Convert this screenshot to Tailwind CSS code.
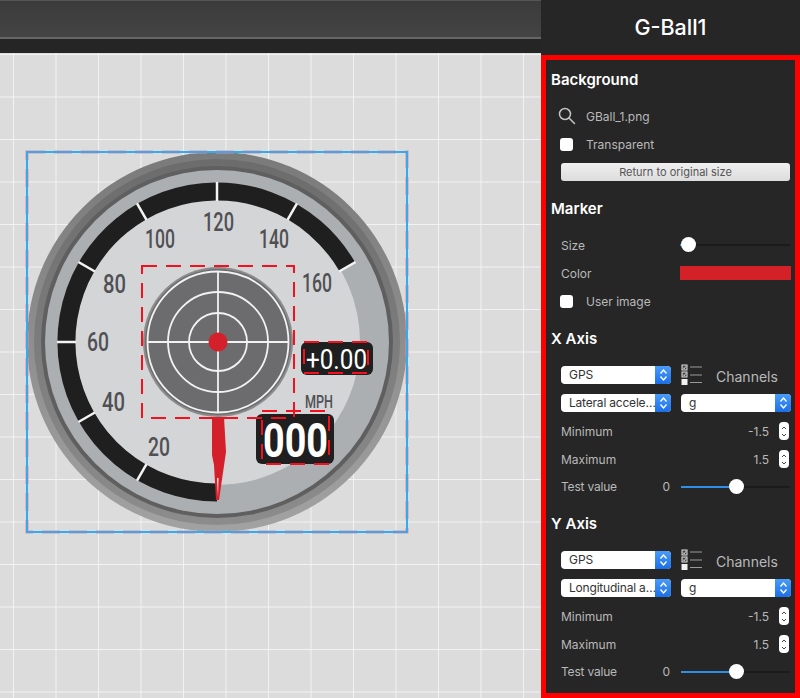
<!DOCTYPE html>
<html lang="en">
<head>
<meta charset="UTF-8">
<title>G-Ball1</title>
<script src="https://cdn.jsdelivr.net/npm/@tailwindcss/browser@4"></script>
</head>
<body class="bg-[#262626] font-['Inter','Liberation_Sans',sans-serif]">
<div class="flex w-[800px] h-[698px] overflow-hidden">

  <!-- left: toolbar and canvas -->
  <div class="flex flex-col w-[541px] shrink-0">
    <div class="h-[39px] border-t border-b-2 border-t-[#555] border-b-[#666] bg-gradient-to-b from-[#3b3b3b] to-[#444]"></div>
    <div class="h-[14px] bg-[#252525]"></div>
    <div class="relative flex-1 bg-[#dcdcdc] bg-[linear-gradient(to_right,#f2f2f2_1px,transparent_1px),linear-gradient(to_bottom,#f2f2f2_1px,transparent_1px)] bg-[size:42.5px_42.5px] bg-[position:13px_1px]">
      <svg class="absolute inset-0" width="541" height="645" viewBox="0 53 541 645" font-family="Roboto, sans-serif">
        <defs>
          <linearGradient id="rim" x1="0" y1="0" x2="0" y2="1">
            <stop offset="0" stop-color="#7a7a7a"/>
            <stop offset="1" stop-color="#a2a2a2"/>
          </linearGradient>
          <linearGradient id="rim2" x1="0" y1="0" x2="0" y2="1">
            <stop offset="0" stop-color="#6c6c6c"/>
            <stop offset="1" stop-color="#8c8c8c"/>
          </linearGradient>
        </defs>

        <!-- dial -->
        <circle cx="217" cy="342" r="190" fill="url(#rim)"/>
        <circle cx="217" cy="342" r="183" fill="url(#rim2)"/>
        <circle cx="217" cy="342" r="176" fill="#5f5f5f"/>
        <circle cx="217" cy="342" r="172" fill="#abafb2"/>
        <circle cx="217" cy="342" r="143" fill="#d4d5d7"/>
        <path d="M217 492.5 A150.5 150.5 0 1 1 347.3 266.8" fill="none" stroke="#1f1f1f" stroke-width="18"/>
        <g stroke="#f4f4f4" stroke-width="2.5">
          <line x1="217" y1="483" x2="217" y2="502" transform="rotate(30 217 342)"/>
          <line x1="217" y1="483" x2="217" y2="502" transform="rotate(60 217 342)"/>
          <line x1="217" y1="483" x2="217" y2="502" transform="rotate(90 217 342)"/>
          <line x1="217" y1="483" x2="217" y2="502" transform="rotate(120 217 342)"/>
          <line x1="217" y1="483" x2="217" y2="502" transform="rotate(150 217 342)"/>
          <line x1="217" y1="483" x2="217" y2="502" transform="rotate(180 217 342)"/>
          <line x1="217" y1="483" x2="217" y2="502" transform="rotate(210 217 342)"/>
          <line x1="217" y1="483" x2="217" y2="502" transform="rotate(240 217 342)"/>
        </g>

        <!-- scale numbers -->
        <g fill="#505054" font-size="26" font-weight="500">
          <text x="148" y="456" textLength="22" lengthAdjust="spacingAndGlyphs">20</text>
          <text x="102" y="411" textLength="23" lengthAdjust="spacingAndGlyphs">40</text>
          <text x="87" y="351" textLength="22" lengthAdjust="spacingAndGlyphs">60</text>
          <text x="103" y="293" textLength="23" lengthAdjust="spacingAndGlyphs">80</text>
          <text x="145" y="248" textLength="30" lengthAdjust="spacingAndGlyphs">100</text>
          <text x="203" y="231" textLength="31" lengthAdjust="spacingAndGlyphs">120</text>
          <text x="259" y="248" textLength="30" lengthAdjust="spacingAndGlyphs">140</text>
          <text x="302" y="292" textLength="30" lengthAdjust="spacingAndGlyphs">160</text>
          <text x="305" y="408" font-size="18" textLength="28" lengthAdjust="spacingAndGlyphs">MPH</text>
        </g>

        <!-- needle -->
        <polygon points="212,417 224,417 226,452 219,500 216,500 214,465 212,455" fill="#d4202a"/>
        <polygon points="217,478 218.500,478 218,497" fill="#f4f4f4"/>

        <!-- target -->
        <circle cx="218" cy="342" r="75" fill="#8c8c8c"/>
        <circle cx="218" cy="342" r="73" fill="#6c6c6e"/>
        <g fill="none" stroke="#f2f2f2" stroke-width="1.800">
          <circle cx="218" cy="342" r="70.500"/>
          <circle cx="218" cy="342" r="50"/>
          <circle cx="218" cy="342" r="29"/>
          <line x1="147.500" y1="342" x2="288.500" y2="342"/>
          <line x1="218" y1="271.500" x2="218" y2="412.500"/>
        </g>
        <circle cx="218" cy="342" r="9.500" fill="#d4202a"/>

        <!-- readouts -->
        <rect x="301" y="342" width="72" height="33" rx="6" fill="#1f1f1f"/>
        <text x="306" y="369" font-size="28" font-weight="400" fill="#fff" textLength="61" lengthAdjust="spacingAndGlyphs">+0.00</text>
        <rect x="256" y="414" width="78" height="50" rx="6" fill="#1f1f1f"/>
        <text x="263" y="457" font-size="49" font-weight="700" fill="#fff" textLength="65" lengthAdjust="spacingAndGlyphs">000</text>

        <!-- selection outlines -->
        <g fill="none" stroke="#f5101f" stroke-width="2" stroke-dasharray="15 9">
          <rect x="142" y="266" width="152" height="152"/>
          <rect x="304" y="342" width="64" height="31"/>
          <rect x="262" y="411" width="67" height="53"/>
        </g>
        <rect x="27" y="152" width="380" height="380" fill="none" stroke="#ee8a94" stroke-width="3" stroke-dasharray="18 9"/>
        <rect x="27" y="152" width="380" height="380" fill="none" stroke="#36aaf0" stroke-width="2"/>
      </svg>
    </div>
  </div>

  <!-- right: properties panel -->
  <div class="flex flex-col w-[259px] shrink-0 bg-[#262626] text-[#b9b9b9] text-[12px]">
    <div class="h-[55px] flex items-center justify-center text-[21.500px] font-medium text-white">G-Ball1</div>
    <div class="h-[643px] border-[5px] border-[#ff0000] bg-[#262626]">

      <h2 class="h-[38px] pl-[5px] pt-[2px] flex items-center text-[15px] font-semibold text-white">Background</h2>
      <div class="mt-[4px] h-[28px] pl-[12px] flex items-center">
        <svg class="w-[18px] h-[18px] shrink-0" viewBox="0 0 18 18" fill="none" stroke="#c4c4c4" stroke-width="1.500" stroke-linecap="round">
          <circle cx="7" cy="7" r="5.500"/>
          <line x1="11" y1="11" x2="16.500" y2="16.500"/>
        </svg>
        <span class="ml-[10px] pt-[2px]">GBall_1.png</span>
      </div>
      <div class="h-[28px] pl-[14px] flex items-center">
        <span class="w-[13px] h-[13px] rounded-[3px] bg-white"></span>
        <span class="ml-[13px] pt-[2px]">Transparent</span>
      </div>
      <div class="h-[28px] pl-[15px] pr-[5px] flex items-center">
        <button class="w-full h-[18px] rounded-[3px] bg-gradient-to-b from-[#f0f0f0] to-[#dcdcdc] text-[11px] text-[#555]">Return to original size</button>
      </div>

      <h2 class="mt-[3px] h-[38px] pl-[5px] pt-[2px] flex items-center text-[15px] font-semibold text-white">Marker</h2>
      <div class="mt-[4px] h-[28px] pl-[15px] pr-[5px] flex items-center justify-between">
        <span class="pt-[2px]">Size</span>
        <div class="relative w-[110px] h-[2px] bg-[#1b1b1b]">
          <span class="absolute left-0 top-0 h-[2px] w-[8px] bg-[#2f8fe8]"></span>
          <span class="absolute left-[1px] top-[-7px] w-[15px] h-[15px] rounded-full bg-white"></span>
        </div>
      </div>
      <div class="h-[28px] pl-[15px] pr-[4px] flex items-center justify-between">
        <span class="pt-[2px]">Color</span>
        <span class="w-[111px] h-[14px] bg-[#d42027]"></span>
      </div>
      <div class="h-[28px] pl-[14px] flex items-center">
        <span class="w-[13px] h-[13px] rounded-[3px] bg-white"></span>
        <span class="ml-[13px] pt-[2px]">User image</span>
      </div>

      <h2 class="mt-[4px] h-[38px] pl-[5px] pt-[2px] flex items-center text-[15px] font-semibold text-white">X Axis</h2>
      <div class="mt-[4px] h-[28px] pl-[15px] flex items-center">
        <div class="flex items-center w-[110px] h-[18px] rounded-[4px] bg-white overflow-hidden text-[#333]">
          <span class="flex-1 pl-[8px]">GPS</span>
          <span class="flex items-center justify-center w-[16px] h-full bg-gradient-to-b from-[#4a9cf8] to-[#1a6fe8]">
            <svg width="9" height="14" viewBox="0 0 9 14" fill="none" stroke="#fff" stroke-width="1.400"><path d="M1.500 5.500 4.500 2 7.500 5.500M1.500 8.500 4.500 12 7.500 8.500"/></svg>
          </span>
        </div>
        <svg class="ml-[10px] shrink-0" width="22" height="22" viewBox="0 0 22 22">
          <rect x="1" y="1" width="5" height="5" fill="#444" stroke="#e4e4e4"/>
          <path d="M2 3.500 3.200 4.800 5 2.200" fill="none" stroke="#fff" stroke-width=".8"/>
          <rect x="1" y="8" width="5" height="5" fill="#444" stroke="#e4e4e4"/>
          <path d="M2 10.500 3.200 11.800 5 9.200" fill="none" stroke="#fff" stroke-width=".8"/>
          <rect x=".5" y="15" width="6" height="6" fill="#f2f2f2"/>
          <g stroke="#9a9a9a" stroke-width="1"><line x1="9" y1="3" x2="21" y2="3"/><line x1="9" y1="11" x2="21" y2="11"/><line x1="9" y1="18.500" x2="21" y2="18.500"/></g>
        </svg>
        <span class="ml-[13px] pt-[3px] text-[14px] leading-none">Channels</span>
      </div>
      <div class="h-[27px] pl-[15px] flex items-center">
        <div class="flex items-center w-[110px] h-[18px] rounded-[4px] bg-white overflow-hidden text-[#333]">
          <span class="flex-1 min-w-0 pl-[8px] whitespace-nowrap tracking-[-0.2px]">Lateral accele…</span>
          <span class="flex items-center justify-center w-[16px] h-full shrink-0 bg-gradient-to-b from-[#4a9cf8] to-[#1a6fe8]">
            <svg width="9" height="14" viewBox="0 0 9 14" fill="none" stroke="#fff" stroke-width="1.400"><path d="M1.500 5.500 4.500 2 7.500 5.500M1.500 8.500 4.500 12 7.500 8.500"/></svg>
          </span>
        </div>
        <div class="ml-[10px] flex items-center w-[110px] h-[18px] rounded-[4px] bg-white overflow-hidden text-[#333]">
          <span class="flex-1 pl-[8px]">g</span>
          <span class="flex items-center justify-center w-[16px] h-full bg-gradient-to-b from-[#4a9cf8] to-[#1a6fe8]">
            <svg width="9" height="14" viewBox="0 0 9 14" fill="none" stroke="#fff" stroke-width="1.400"><path d="M1.500 5.500 4.500 2 7.500 5.500M1.500 8.500 4.500 12 7.500 8.500"/></svg>
          </span>
        </div>
      </div>
      <div class="mt-[1px] h-[28px] pl-[15px] pr-[6px] flex items-center">
        <span class="flex-1 pt-[2px]">Minimum</span>
        <span class="pt-[2px]">-1.5</span>
        <span class="ml-[10px] flex flex-col items-center justify-center w-[10px] h-[18px] rounded-[4px] bg-white">
          <svg width="6" height="13" viewBox="0 0 6 13" fill="none" stroke="#444" stroke-width="1"><path d="M1 4 3 2 5 4M1 9 3 11 5 9"/></svg>
        </span>
      </div>
      <div class="h-[28px] pl-[15px] pr-[6px] flex items-center">
        <span class="flex-1 pt-[2px]">Maximum</span>
        <span class="pt-[2px]">1.5</span>
        <span class="ml-[10px] flex flex-col items-center justify-center w-[10px] h-[18px] rounded-[4px] bg-white">
          <svg width="6" height="13" viewBox="0 0 6 13" fill="none" stroke="#444" stroke-width="1"><path d="M1 4 3 2 5 4M1 9 3 11 5 9"/></svg>
        </span>
      </div>
      <div class="h-[27px] pl-[15px] pr-[5px] flex items-center">
        <span class="flex-1 tracking-[-0.2px]">Test value</span>
        <span>0</span>
        <div class="relative ml-[11px] w-[109px] h-[2px] bg-[#1b1b1b]">
          <span class="absolute left-0 top-0 h-[2px] w-[55px] bg-[#2f8fe8]"></span>
          <span class="absolute left-[48px] top-[-7px] w-[15px] h-[15px] rounded-full bg-white"></span>
        </div>
      </div>

      <h2 class="mt-[4px] h-[38px] pl-[5px] pt-[2px] flex items-center text-[15px] font-semibold text-white">Y Axis</h2>
      <div class="mt-[4px] h-[28px] pl-[15px] flex items-center">
        <div class="flex items-center w-[110px] h-[18px] rounded-[4px] bg-white overflow-hidden text-[#333]">
          <span class="flex-1 pl-[8px]">GPS</span>
          <span class="flex items-center justify-center w-[16px] h-full bg-gradient-to-b from-[#4a9cf8] to-[#1a6fe8]">
            <svg width="9" height="14" viewBox="0 0 9 14" fill="none" stroke="#fff" stroke-width="1.400"><path d="M1.500 5.500 4.500 2 7.500 5.500M1.500 8.500 4.500 12 7.500 8.500"/></svg>
          </span>
        </div>
        <svg class="ml-[10px] shrink-0" width="22" height="22" viewBox="0 0 22 22">
          <rect x="1" y="1" width="5" height="5" fill="#444" stroke="#e4e4e4"/>
          <path d="M2 3.500 3.200 4.800 5 2.200" fill="none" stroke="#fff" stroke-width=".8"/>
          <rect x="1" y="8" width="5" height="5" fill="#444" stroke="#e4e4e4"/>
          <path d="M2 10.500 3.200 11.800 5 9.200" fill="none" stroke="#fff" stroke-width=".8"/>
          <rect x=".5" y="15" width="6" height="6" fill="#f2f2f2"/>
          <g stroke="#9a9a9a" stroke-width="1"><line x1="9" y1="3" x2="21" y2="3"/><line x1="9" y1="11" x2="21" y2="11"/><line x1="9" y1="18.500" x2="21" y2="18.500"/></g>
        </svg>
        <span class="ml-[13px] pt-[3px] text-[14px] leading-none">Channels</span>
      </div>
      <div class="h-[27px] pl-[15px] flex items-center">
        <div class="flex items-center w-[110px] h-[18px] rounded-[4px] bg-white overflow-hidden text-[#333]">
          <span class="flex-1 min-w-0 pl-[8px] whitespace-nowrap tracking-[-0.2px]">Longitudinal a…</span>
          <span class="flex items-center justify-center w-[16px] h-full shrink-0 bg-gradient-to-b from-[#4a9cf8] to-[#1a6fe8]">
            <svg width="9" height="14" viewBox="0 0 9 14" fill="none" stroke="#fff" stroke-width="1.400"><path d="M1.500 5.500 4.500 2 7.500 5.500M1.500 8.500 4.500 12 7.500 8.500"/></svg>
          </span>
        </div>
        <div class="ml-[10px] flex items-center w-[110px] h-[18px] rounded-[4px] bg-white overflow-hidden text-[#333]">
          <span class="flex-1 pl-[8px]">g</span>
          <span class="flex items-center justify-center w-[16px] h-full bg-gradient-to-b from-[#4a9cf8] to-[#1a6fe8]">
            <svg width="9" height="14" viewBox="0 0 9 14" fill="none" stroke="#fff" stroke-width="1.400"><path d="M1.500 5.500 4.500 2 7.500 5.500M1.500 8.500 4.500 12 7.500 8.500"/></svg>
          </span>
        </div>
      </div>
      <div class="mt-[1px] h-[28px] pl-[15px] pr-[6px] flex items-center">
        <span class="flex-1 pt-[2px]">Minimum</span>
        <span class="pt-[2px]">-1.5</span>
        <span class="ml-[10px] flex flex-col items-center justify-center w-[10px] h-[18px] rounded-[4px] bg-white">
          <svg width="6" height="13" viewBox="0 0 6 13" fill="none" stroke="#444" stroke-width="1"><path d="M1 4 3 2 5 4M1 9 3 11 5 9"/></svg>
        </span>
      </div>
      <div class="h-[28px] pl-[15px] pr-[6px] flex items-center">
        <span class="flex-1 pt-[2px]">Maximum</span>
        <span class="pt-[2px]">1.5</span>
        <span class="ml-[10px] flex flex-col items-center justify-center w-[10px] h-[18px] rounded-[4px] bg-white">
          <svg width="6" height="13" viewBox="0 0 6 13" fill="none" stroke="#444" stroke-width="1"><path d="M1 4 3 2 5 4M1 9 3 11 5 9"/></svg>
        </span>
      </div>
      <div class="h-[27px] pl-[15px] pr-[5px] flex items-center">
        <span class="flex-1 tracking-[-0.2px]">Test value</span>
        <span>0</span>
        <div class="relative ml-[11px] w-[109px] h-[2px] bg-[#1b1b1b]">
          <span class="absolute left-0 top-0 h-[2px] w-[55px] bg-[#2f8fe8]"></span>
          <span class="absolute left-[48px] top-[-7px] w-[15px] h-[15px] rounded-full bg-white"></span>
        </div>
      </div>

    </div>
  </div>
</div>
</body>
</html>
